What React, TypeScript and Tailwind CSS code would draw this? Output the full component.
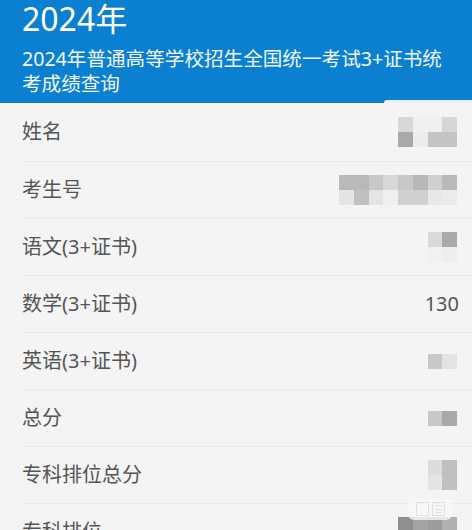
import React from "react";

type Row = {
  label: string;
  value?: string;
  cols?: number;
  cells?: string[];
};

// mosaic colours taken from the blurred values in the screenshot
const ROWS: Row[] = [
  { label: "姓名", cols: 4, cells: ["#d8d8d8", "#efefef", "#efefef", "#d6d6d6", "#a9a9a9", "#ececec", "#c4c4c4", "#c4c4c4"] },
  {
    label: "考生号",
    cols: 8,
    cells: [
      "#b9b9b9", "#b9b9b9", "#c8c8c8", "#d8d8d8", "#c8c8c8", "#b8b8b8", "#d0d0d0", "#b9b9b9",
      "#e4e4e4", "#c0c0c0", "#e4e4e4", "#efefef", "#d0d0d0", "#d0d0d0", "#e8e8e8", "#ebebeb",
    ],
  },
  { label: "语文(3+证书)", cols: 2, cells: ["#dadada", "#a9a9a9", "#f1f1f1", "#eeeeee"] },
  { label: "数学(3+证书)", value: "130" },
  { label: "英语(3+证书)", cols: 2, cells: ["#c8c8c8", "#e3e3e3"] },
  { label: "总分", cols: 2, cells: ["#c8c8c8", "#a9a9a9"] },
  { label: "专科排位总分", cols: 2, cells: ["#dcdcdc", "#c0c0c0", "#e4e4e4", "#c0c0c0"] },
  { label: "专科排位", cols: 4, cells: ["#8f8f8f", "#a3a3a3", "#9c9c9c", "#b0b0b0", "#8f8f8f", "#a3a3a3", "#9c9c9c", "#b0b0b0"] },
];

function Mosaic({ cols, cells }: { cols: number; cells: string[] }) {
  return (
    <div className="flex flex-wrap" style={{ width: cols * 14.75 }}>
      {cells.map((c, i) => (
        <div key={i} className="h-[15px] w-[14.75px]" style={{ backgroundColor: c }} />
      ))}
    </div>
  );
}

export default function App() {
  return (
    <div
      className="relative h-[530px] w-[472px] overflow-hidden bg-[#f4f4f4]"
      style={{ fontFamily: '"Noto Sans", "Noto Sans CJK SC", sans-serif' }}
    >
      {/* Blue title bar */}
      <header className="relative h-[103px] bg-[#0b7fd0] pl-[22px] pr-[12px] pt-[3px] text-white">
        <div className="text-[32px] leading-none">2024年</div>
        <div className="mt-[11px] text-[19.6px] leading-[25px] text-[#f2f8fd]">
          2024年普通高等学校招生全国统一考试3+证书统考成绩查询
        </div>
        <div className="absolute bottom-0 right-0 h-[3px] w-[88px] rounded-tl-[6px] bg-[#eaf2f9]" />
      </header>

      {/* Result rows */}
      <div className="pl-[22px]">
        {ROWS.map((row, i) => (
          <div
            key={row.label}
            className={`flex items-center justify-between border-b border-[#e8e8e8] pr-[15px] ${i === 0 ? "h-[59px]" : "h-[57px]"}`}
          >
            <span className="text-[20px] leading-none text-[#555555]">{row.label}</span>
            {row.value ? (
              <span className="-mr-[2px] text-[20px] leading-none text-[#555555]">{row.value}</span>
            ) : row.cells && row.cols ? (
              <Mosaic cols={row.cols} cells={row.cells} />
            ) : null}
          </div>
        ))}
      </div>

      {/* faint floating image button */}
      <div className="absolute left-[408px] top-[498px] flex h-[22px] w-[44px] items-center justify-center gap-[3px] rounded-[6px] bg-[#f7f7f7]/80">
        <div className="h-[14px] w-[13px] border border-[#e0e0e0]" />
        <div className="flex h-[14px] w-[13px] flex-col justify-between border border-[#e0e0e0] p-[2px]">
          <div className="h-px bg-[#e0e0e0]" />
          <div className="h-px bg-[#e0e0e0]" />
          <div className="h-px bg-[#e0e0e0]" />
        </div>
      </div>
    </div>
  );
}
